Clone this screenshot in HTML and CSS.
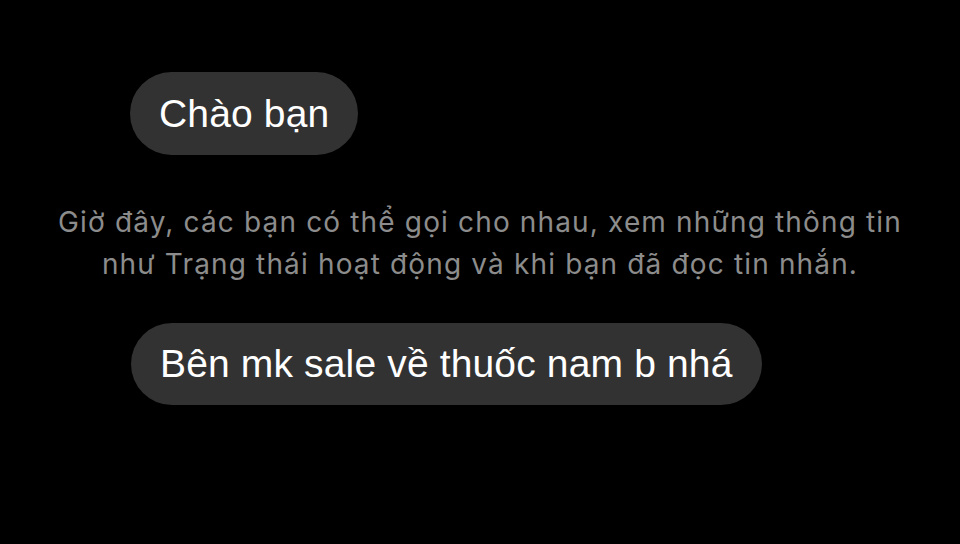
FILE: index.html
```html
<!DOCTYPE html>
<html lang="vi">
<head>
<meta charset="utf-8">
<link rel="stylesheet" href="styles.css">
</head>
<body>
<main class="chat">
  <div class="row"><div class="bubble b1">Chào bạn</div></div>
  <p class="notice">Giờ đây, các bạn có thể gọi cho nhau, xem những thông tin<br>như Trạng thái hoạt động và khi bạn đã đọc tin nhắn.</p>
  <div class="row"><div class="bubble b2">Bên mk sale về thuốc nam b nhá</div></div>
</main>
</body>
</html>
```
FILE: styles.css
```css
html, body {
  margin: 0;
  padding: 0;
  background: #000;
  width: 960px;
  height: 544px;
  overflow: hidden;
}
.chat {
  display: flex;
  flex-direction: column;
  padding-top: 72px;
  font-family: "Liberation Sans", Arial, sans-serif;
}
.row {
  display: flex;
  padding-left: 130px;
}
.bubble {
  background: #323232;
  color: #fff;
  font-size: 39px;
  line-height: 83px;
  height: 83px;
  padding: 0 29px;
  border-radius: 42px;
  white-space: nowrap;
  letter-spacing: 0.15px;
}
.b2 {
  margin-left: 1px;
  height: 82px;
  line-height: 82px;
}
.notice {
  margin: 46px 0 38px;
  text-align: center;
  color: #8c8c8c;
  font-family: Inter, "Liberation Sans", sans-serif;
  font-size: 28px;
  line-height: 42px;
  letter-spacing: 1.15px;
}
```
